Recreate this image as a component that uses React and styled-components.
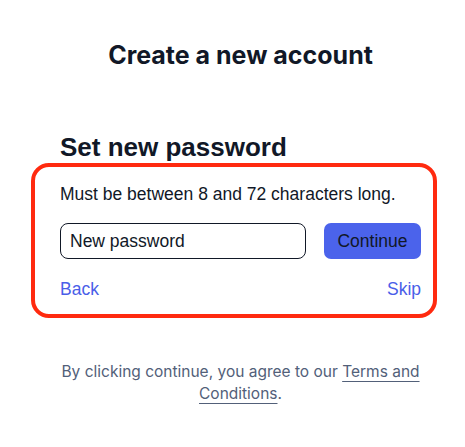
import styled, { createGlobalStyle } from "styled-components";

const GlobalStyle = createGlobalStyle`
  body {
    margin: 0;
    background: #ffffff;
    font-family: "Liberation Sans", Arial, sans-serif;
    color: #111827;
  }
`;

export default function App() {
  return (
    <>
      <GlobalStyle />
      <Page>
        <Title>Create a new account</Title>
        <Column>
          <Heading>Set new password</Heading>
          <Panel>
            <Hint>Must be between 8 and 72 characters long.</Hint>
            <InputRow>
              <PasswordInput type="password" placeholder="New password" />
              <ContinueButton>Continue</ContinueButton>
            </InputRow>
            <LinkRow>
              <TextLink href="#">Back</TextLink>
              <TextLink href="#">Skip</TextLink>
            </LinkRow>
          </Panel>
          <Footer>
            By clicking continue, you agree to our <a href="#">Terms and Conditions</a>.
          </Footer>
        </Column>
      </Page>
    </>
  );
}

const Page = styled.main`
  display: flex;
  flex-direction: column;
  padding: 40px 0 0 60px;
  width: 361px;
`;

const Title = styled.h1`
  margin: 0;
  font-family: Inter, "Liberation Sans", sans-serif;
  font-size: 25px;
  font-weight: 700;
  line-height: 30px;
  text-align: center;
  color: #111827;
`;

const Column = styled.section`
  display: flex;
  flex-direction: column;
  margin-top: 63px;
`;

const Heading = styled.h2`
  margin: 0;
  font-size: 26px;
  font-weight: 700;
  line-height: 28px;
  color: #111827;
`;

const Panel = styled.div`
  display: flex;
  flex-direction: column;
  margin: 2px -16px 0 -29px;
  padding: 15px 12px 15px 25px;
  border: 4px solid #ff2a0f;
  border-radius: 18px;
`;

const Hint = styled.p`
  margin: 0;
  font-size: 17.5px;
  line-height: 24px;
  color: #111827;
`;

const InputRow = styled.div`
  display: flex;
  gap: 18px;
  margin-top: 17px;
`;

const PasswordInput = styled.input`
  flex: 1;
  min-width: 0;
  height: 36px;
  box-sizing: border-box;
  padding: 0 9px;
  border: 1px solid #111827;
  border-radius: 8px;
  font-family: "Liberation Sans", Arial, sans-serif;
  font-size: 17.5px;
  &::placeholder {
    color: #111827;
  }
`;

const ContinueButton = styled.button`
  width: 97px;
  height: 36px;
  padding: 0;
  border: none;
  border-radius: 7px;
  background: #4b63eb;
  color: #111827;
  font-family: "Liberation Sans", Arial, sans-serif;
  font-size: 17.5px;
`;

const LinkRow = styled.div`
  display: flex;
  justify-content: space-between;
  margin-top: 20px;
`;

const TextLink = styled.a`
  font-size: 17.5px;
  line-height: 20px;
  color: #4a5ee8;
  text-decoration: none;
`;

const Footer = styled.p`
  margin: 43px -10px 0;
  font-family: Inter, "Liberation Sans", sans-serif;
  font-size: 15.5px;
  line-height: 22px;
  text-align: center;
  color: #526079;
  a {
    color: inherit;
    text-decoration: underline;
    text-underline-offset: 4px;
  }
`;
